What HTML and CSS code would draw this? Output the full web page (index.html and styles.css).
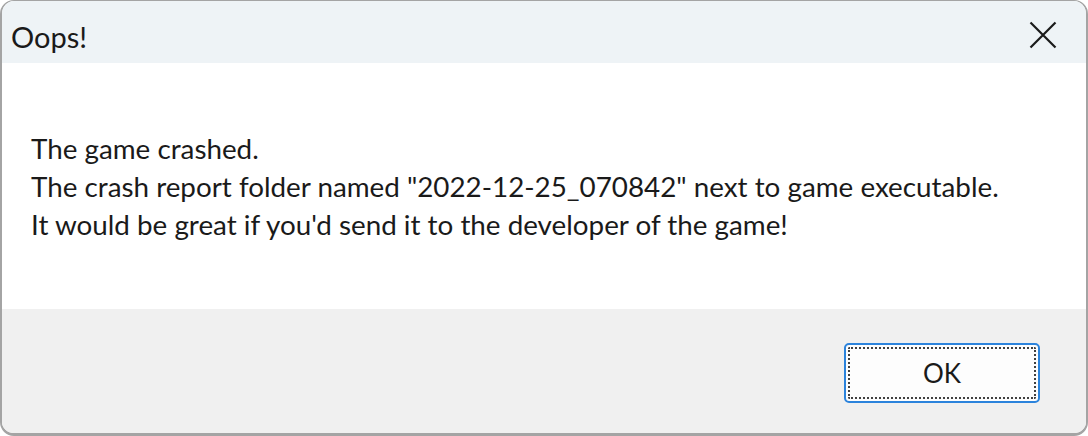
FILE: index.html
```html
<!DOCTYPE html>
<html>
<head>
<meta charset="utf-8">
<link rel="stylesheet" href="styles.css">
</head>
<body>
<div class="window">
  <div class="titlebar">
    <span class="title">Oops!</span>
    <span class="close">
      <svg width="28" height="28" viewBox="0 0 28 28"><path d="M1.5 1.5 L26.5 26.5 M26.5 1.5 L1.5 26.5" stroke="#1a1a1a" stroke-width="2.2" fill="none"/></svg>
    </span>
  </div>
  <div class="content">
    <p class="msg">The game crashed.</p>
    <p class="msg">The crash report folder named "2022-12-25_070842" next to game executable.</p>
    <p class="msg">It would be great if you'd send it to the developer of the game!</p>
  </div>
  <div class="footer">
    <button class="ok"><span class="focus">OK</span></button>
  </div>
</div>
</body>
</html>
```
FILE: styles.css
```css
html, body {
  margin: 0;
  padding: 0;
  background: #ffffff;
}
body {
  width: 1088px;
  height: 436px;
  font-family: "Lato", "Open Sans", sans-serif;
  color: #1a1a1a;
}
.window {
  box-sizing: border-box;
  width: 1088px;
  height: 436px;
  border: 2px solid #a4a4a4;
  border-top-width: 1px;
  border-bottom-width: 3px;
  border-radius: 14px;
  overflow: hidden;
  display: flex;
  flex-direction: column;
}
.titlebar {
  height: 62px;
  box-sizing: border-box;
  background: #eef3f6;
  display: flex;
  align-items: flex-start;
  justify-content: space-between;
  padding: 0 29px 0 9px;
}
.title {
  font-size: 29px;
  line-height: 34px;
  margin-top: 19px;
  color: #1a1a1a;
}
.close {
  display: flex;
  margin-top: 20px;
}
.content {
  background: #ffffff;
  height: 246px;
  box-sizing: border-box;
  padding: 67px 29px 0;
}
.msg {
  margin: 0;
  font-size: 27.8px;
  line-height: 38px;
  color: #1a1a1a;
}
.footer {
  flex: 1;
  background: #f0f0f0;
  display: flex;
  justify-content: flex-end;
  align-items: flex-start;
  padding: 34px 46px 0 0;
}
.ok {
  width: 196px;
  height: 60px;
  box-sizing: border-box;
  border: 2px solid #2b83dc;
  border-radius: 5px;
  background: #fdfdfd;
  padding: 2px;
  font-family: inherit;
  display: flex;
}
.focus {
  flex: 1;
  border: 2px dotted #404040;
  border-radius: 2px;
  display: flex;
  align-items: center;
  justify-content: center;
  font-size: 26px;
  color: #1a1a1a;
}
```
